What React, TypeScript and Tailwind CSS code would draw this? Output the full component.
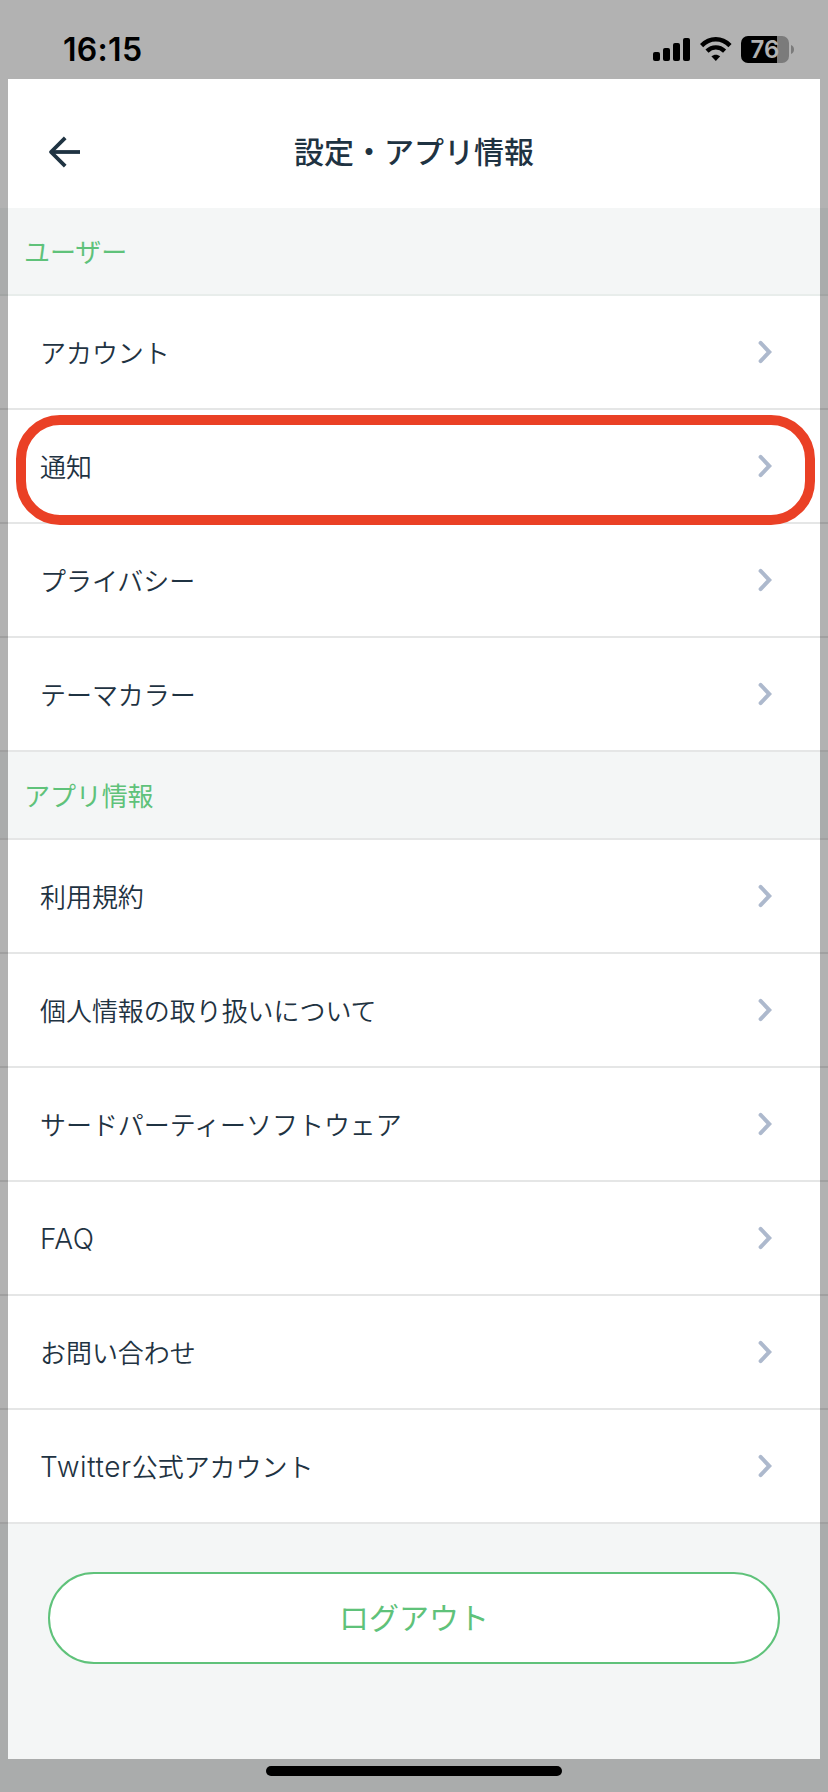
import { clsx } from "clsx";

const sections = [
  {
    title: "ユーザー",
    divider: "border-[#e8edeb]",
    items: [
      { label: "アカウント" },
      { label: "通知", highlighted: true },
      { label: "プライバシー" },
      { label: "テーマカラー" },
    ],
  },
  {
    title: "アプリ情報",
    divider: "border-[#e5e6e6]",
    items: [
      { label: "利用規約" },
      { label: "個人情報の取り扱いについて" },
      { label: "サードパーティーソフトウェア" },
      { latin: "FAQ", label: "" },
      { label: "お問い合わせ" },
      { latin: "Twitter", label: "公式アカウント" },
    ],
  },
];

function StatusBar() {
  return (
    <div className="flex h-[79px] items-start justify-between pr-[34px] pl-[63px] text-black">
      <span className="mt-[30px] font-['Inter'] text-[32px] leading-[40px] font-semibold tracking-[0.3px]">
        16:15
      </span>
      <div className="mt-9 flex items-start">
        <svg width="38" height="27" viewBox="0 0 38 27" className="mr-[9px]">
          <rect x="0" y="16" width="7" height="9" rx="2" />
          <rect x="10" y="12" width="7" height="13" rx="2" />
          <rect x="20" y="7" width="7" height="18" rx="2" />
          <rect x="30" y="2" width="7" height="23" rx="2" />
        </svg>
        <svg width="32" height="27" viewBox="0 0 32 27" className="mr-[9px]">
          <g fill="none" stroke="#000" strokeWidth="4.4">
            <path d="M1.6 9.6C9.8 1.2 21.8 1.2 30 9.6" />
            <path d="M7 15.1C12.1 10.1 19.5 10.1 24.6 15.1" />
          </g>
          <path d="M11.4 20.3C14 18.1 17.6 18.1 20.2 20.3L15.8 25Z" />
        </svg>
        <div className="flex h-[27px] w-12 items-center justify-center overflow-hidden rounded-[7px] bg-linear-to-r from-black from-75% to-[#b0b0b0] to-75%">
          <span className="font-['Inter'] text-[24px] leading-[27px] font-semibold tracking-[0.2px] text-white">
            76
          </span>
        </div>
        <svg width="3" height="9" viewBox="0 0 3 9" className="mt-[9px] ml-0.5">
          <path d="M0 0C4 1.5 4 7.5 0 9Z" fill="#b0b0b0" />
        </svg>
      </div>
    </div>
  );
}

function Header() {
  return (
    <header className="flex h-[129px] items-center px-12 pt-[17px]">
      <svg width="32" height="32" viewBox="0 0 32 32" fill="none" stroke="#1f3342" strokeWidth="3.8">
        <path d="M32 16H3" />
        <path d="M17.2 1.8L3 16L17.2 30.2" strokeLinejoin="round" />
      </svg>
      <h1 className="mr-8 flex-1 pb-[5px] text-center text-[30px] leading-10 font-medium">
        設定・アプリ情報
      </h1>
    </header>
  );
}

function Chevron() {
  return (
    <svg width="14" height="24" viewBox="0 0 14 24" fill="none" stroke="#adb9cd" strokeWidth="4">
      <path d="M2.6 2.9L11.3 12L2.6 21.1" strokeLinecap="round" />
    </svg>
  );
}

export default function App() {
  return (
    <div
      lang="ja"
      className="relative flex h-[1792px] w-[828px] flex-col overflow-hidden bg-white font-['Noto_Sans_CJK_JP',sans-serif] text-[#1f3342]"
    >
      <StatusBar />
      <Header />

      {sections.map(({ title, divider, items }) => (
        <section key={title}>
          <h2
            className={clsx(
              "flex h-[88px] items-center border-b-2 bg-[#f4f6f6] pb-px pl-6 text-[26px] font-normal tracking-[-0.1px] text-[#5fc27a]",
              divider
            )}
          >
            {title}
          </h2>
          <ul>
            {items.map(({ label, latin, highlighted }: { label: string; latin?: string; highlighted?: boolean }) => (
              <li
                key={label}
                className="relative flex h-[114px] items-center justify-between border-b-2 border-[#e5e6e6] pr-[56px] pl-10 text-[26px] font-[350] tracking-[-0.05px]"
              >
                <span className="leading-10">
                  {latin && (
                    <span
                      className={clsx(
                        "font-['Inter'] text-[28px] font-[350]",
                        latin === "Twitter" ? "tracking-[0.6px]" : "tracking-[0.4px]"
                      )}
                    >
                      {latin}
                    </span>
                  )}
                  {label}
                </span>
                <Chevron />
                {highlighted && (
                  <div className="absolute top-[5px] right-[13px] left-4 z-10 h-[110px] rounded-[44px] border-10 border-[#ea4025]" />
                )}
              </li>
            ))}
          </ul>
        </section>
      ))}

      <div className="flex flex-1 flex-col items-center bg-[#f4f6f6] pt-12">
        <button className="h-[92px] w-[732px] rounded-full border-2 border-[#5fc27a] bg-white pb-1 text-[30px] text-[#5fc27a]">
          ログアウト
        </button>
        <div className="mt-auto mb-4 h-2.5 w-[296px] rounded-full bg-black" />
      </div>

      {/* dimmed frame around the screen */}
      <div className="pointer-events-none absolute inset-0 border-x-8 border-t-[79px] border-b-[33px] border-black/30" />
    </div>
  );
}
